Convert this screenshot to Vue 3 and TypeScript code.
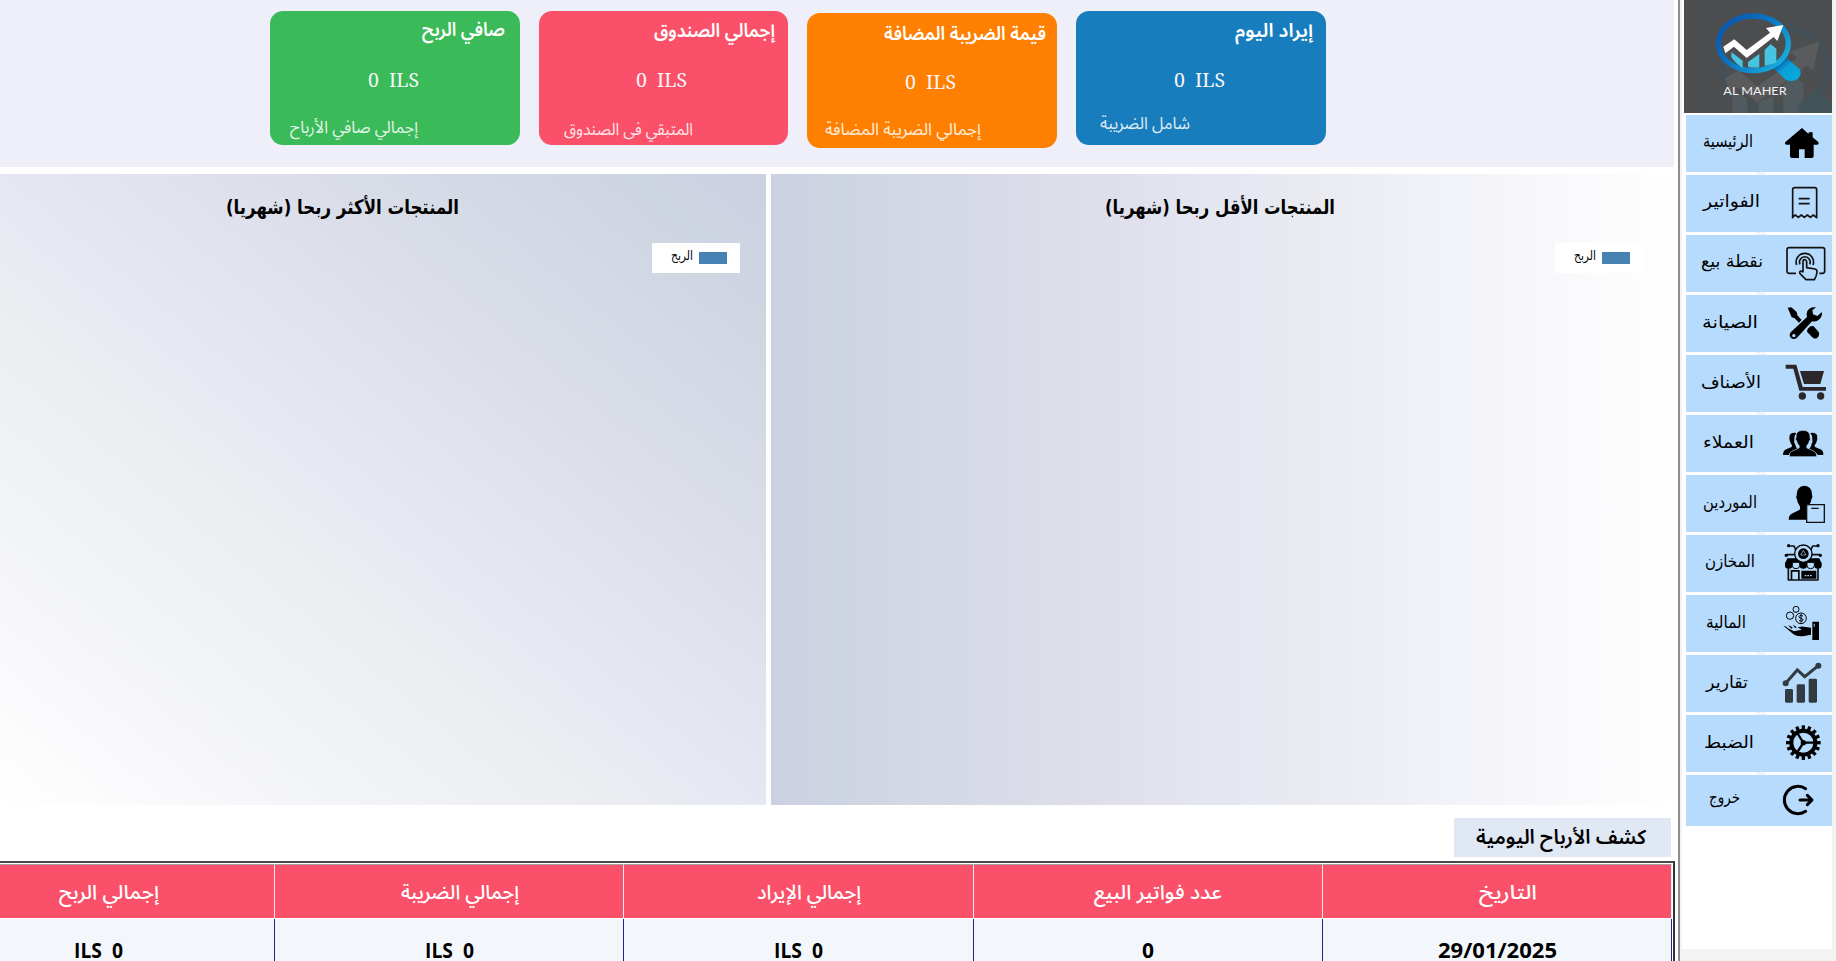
<script setup lang="ts">
import { h, type FunctionalComponent } from 'vue'

interface FitProps {
  text: string
  w: number
  base: number
  height: number
  rtl?: boolean
}

// A single line of text set to an exact width, on an exact baseline.
const FitText: FunctionalComponent<FitProps> = (p) =>
  h('svg', { class: 'fit', width: p.w, height: p.height }, [
    h(
      'text',
      {
        x: p.w / 2,
        y: p.base,
        'text-anchor': 'middle',
        textLength: p.w,
        lengthAdjust: 'spacingAndGlyphs',
        direction: p.rtl === false ? 'ltr' : 'rtl',
      },
      p.text,
    ),
  ])
FitText.props = ['text', 'w', 'base', 'height', 'rtl']

interface Card {
  tone: string
  title: string
  titleW: number
  titleBase: number
  sub: string
  subW: number
  subBase: number
}

const cards: Card[] = [
  { tone: 'green', title: 'صافي الربح', titleW: 83, titleBase: 25, sub: 'إجمالي صافي الأرباح', subW: 128, subBase: 22 },
  { tone: 'pink', title: 'إجمالي الصندوق', titleW: 121, titleBase: 26, sub: 'المتبقي فى الصندوق', subW: 129, subBase: 24 },
  { tone: 'orange', title: 'قيمة الضريبة المضافة', titleW: 162, titleBase: 27, sub: 'إجمالي الضريبة المضافة', subW: 156, subBase: 21.5 },
  { tone: 'blue', title: 'إيراد اليوم', titleW: 78, titleBase: 25.5, sub: 'شامل الضريبة', subW: 90, subBase: 17.5 },
]

interface Column {
  head: string
  headW: number
  value: string
  valueW: number
}

const columns: Column[] = [
  { head: 'إجمالي الربح', headW: 100, value: 'ILS  0', valueW: 49 },
  { head: 'إجمالي الضريبة', headW: 118, value: 'ILS  0', valueW: 49 },
  { head: 'إجمالي الإيراد', headW: 104, value: 'ILS  0', valueW: 49 },
  { head: 'عدد فواتير البيع', headW: 128, value: '0', valueW: 12 },
  { head: 'التاريخ', headW: 58, value: '29/01/2025', valueW: 119 },
]

interface NavItem {
  id: string
  label: string
  left: number
  w: number
  base: number
}

const nav: NavItem[] = [
  { id: 'home', label: 'الرئيسية', left: 17, w: 50, base: 32 },
  { id: 'invoices', label: 'الفواتير', left: 17, w: 57, base: 32 },
  { id: 'pos', label: 'نقطة بيع', left: 15, w: 62, base: 32 },
  { id: 'service', label: 'الصيانة', left: 16, w: 56, base: 32.5 },
  { id: 'items', label: 'الأصناف', left: 15, w: 60, base: 32.5 },
  { id: 'clients', label: 'العملاء', left: 17, w: 51, base: 33 },
  { id: 'suppliers', label: 'الموردين', left: 17, w: 54, base: 32.5 },
  { id: 'stores', label: 'المخازن', left: 18.5, w: 50, base: 32 },
  { id: 'finance', label: 'المالية', left: 20, w: 40, base: 32.5 },
  { id: 'reports', label: 'تقارير', left: 20, w: 42, base: 32.5 },
  { id: 'settings', label: 'الضبط', left: 18, w: 50, base: 33 },
  { id: 'exit', label: 'خروج', left: 23, w: 31, base: 28 },
]

const gearTeeth = Array.from({ length: 16 }, (_, i) => i * 22.5)
</script>

<template>
  <div class="app">
    <main class="main">
      <section class="summary">
        <article v-for="c in cards" :key="c.tone" class="card" :class="c.tone">
          <FitText class="card-title" :text="c.title" :w="c.titleW" :base="c.titleBase" :height="50" />
          <FitText class="card-value" text="0  ILS" :w="51" :base="25.5" :height="50" :rtl="false" />
          <FitText class="card-sub" :text="c.sub" :w="c.subW" :base="c.subBase" :height="34" />
        </article>
      </section>

      <section class="charts">
        <div class="chart most">
          <FitText class="chart-title" text="المنتجات الأكثر ربحا (شهريا)" :w="233" :base="40" :height="69" />
          <div class="legend">
            <FitText class="legend-text" text="الربح" :w="22" :base="17" :height="30" />
            <i class="swatch"></i>
          </div>
        </div>
        <div class="chart least">
          <FitText class="chart-title" text="المنتجات الأقل ربحا (شهريا)" :w="230" :base="40" :height="69" />
          <div class="legend">
            <FitText class="legend-text" text="الربح" :w="22" :base="17" :height="30" />
            <i class="swatch"></i>
          </div>
        </div>
      </section>

      <div class="tag">
        <FitText class="tag-text" text="كشف الأرباح اليومية" :w="170" :base="26" :height="39" />
      </div>

      <section class="table">
        <div v-for="(c, i) in columns" :key="i" class="col">
          <div class="th"><FitText :text="c.head" :w="c.headW" :base="34" :height="53" /></div>
          <div class="td"><FitText :text="c.value" :w="c.valueW" :base="38.5" :height="42" :rtl="false" /></div>
        </div>
      </section>
    </main>

    <aside class="side">
      <div class="panel">
        <svg class="logo" width="148" height="113" viewBox="0 0 444 339">
          <defs>
            <linearGradient id="ring" x1="0" y1="0" x2="1" y2="0.7">
              <stop offset="0" stop-color="#0b4fa8" />
              <stop offset="0.5" stop-color="#0a74c0" />
              <stop offset="1" stop-color="#16a9dc" />
            </linearGradient>
            <linearGradient id="grip" x1="0" y1="0" x2="1" y2="1">
              <stop offset="0.1" stop-color="#0644a0" />
              <stop offset="0.45" stop-color="#0aa0d8" />
              <stop offset="1" stop-color="#08a9dd" />
            </linearGradient>
          </defs>
          <rect width="444" height="339" fill="#4d4e50" />
          <g opacity="0.5">
            <ellipse cx="274" cy="204" rx="158" ry="128" fill="none" stroke="#3e535c" stroke-width="24" />
            <path d="M124 235l40-24 56 48 120-86-24-18 90-32-18 88-20-14-148 110-58-46-24 18z" fill="#66686a" />
            <path d="M146 339v-70l44 26v44zM224 339v-32l44-20v52zM298 339v-84l30-28 30 22v90z" fill="#56686f" />
            <path d="M392 270l52 40v29h-96l-10-20z" fill="#3b5864" />
          </g>
          <path d="M268 204q24-10 40-30l38 32q10 16-4 30-16 12-36 4z" fill="url(#grip)" />
          <ellipse cx="208" cy="130" rx="105" ry="82" fill="#4b4d4f" stroke="url(#ring)" stroke-width="16" />
          <path d="M142 156l34 26v22q-22-14-34-32zM192 186l34-24v40q-18 2-34-2zM242 150l18-18 17 14v42l-35 10z" fill="#47c5e0" />
          <path d="M118 140l33-22 37 32 70-52-12-14 52-9-18 48-11-12-81 63-38-34-26 20z" fill="#fff" />
          <text x="213" y="284" class="brand" text-anchor="middle" textLength="190" lengthAdjust="spacingAndGlyphs">AL MAHER</text>
        </svg>

        <nav class="menu">
          <button v-for="n in nav" :key="n.id" class="item" :class="{ last: n.id === 'exit' }">
            <FitText class="nav-text" :style="{ marginLeft: n.left + 'px' }" :text="n.label" :w="n.w" :base="n.base" :height="50" />
            <svg class="icon" width="50" height="57" viewBox="0 0 150 171">
              <path v-if="n.id === 'home'" d="M66 39L17 80q-6 8 4 9h9v34q0 6 6 6h21v-26h17v26h21q6 0 6-6V89h9q10-1 4-9l-16-13V52h-12v5z" />
              <g v-else-if="n.id === 'invoices'" class="line">
                <path d="M38 128V44q0-6 6-6h60q6 0 6 6v84l-10-8-9 7-9-7-9 7-9-7-9 7-9-7-9 7z" />
                <path d="M56 71h33M56 86h33" />
              </g>
              <g v-else-if="n.id === 'pos'" class="line">
                <path d="M48 115H28q-7 0-7-7V44q0-6 7-6h99q7 0 7 6v64q0 7-7 7h-9" />
                <path d="M50 90a26 26 0 1 1 49 0M60 88a16 16 0 1 1 29 0" />
                <path class="skin" d="M69 111V80q0-6 5-6t6 6v18l25 4q7 2 6 9-1 13-8 23H78L60 116q-3-6 3-8z" />
              </g>
              <g v-else-if="n.id === 'service'">
                <path d="M23 38l11-1 16 14 2 10 13 14-8 8-14-14-8-2z" />
                <path d="M91 94l9-1 16 18q4 10-4 17-8 6-16-2l-15-16q0-9 10-16z" />
                <path fill-rule="evenodd" d="M108 37q-18-3-26 11-4 9-1 18L33 111q-8 10 0 18 9 7 18-1l45-49q13 3 22-6 9-9 8-22l-14 12-13-5-2-12zM42 117a5 5 0 1 1-1 0z" />
              </g>
              <g v-else-if="n.id === 'items'" fill="#2b272b">
                <path d="M17 29h32l19 67h70v11H58L40 41H17zM60 48h72l-11 39H72z" />
                <circle cx="67" cy="123" r="11" /><circle cx="122" cy="123" r="11" />
              </g>
              <g v-else-if="n.id === 'clients'">
                <path d="M9 120q0-13 10-17l16-7q3-4-1-8-8-12-5-27 4-10 20-7-7 8-6 19-2 8 2 13 3 13 9 16-2 6-16 10-10 4-12 8zM130 120q1-13-9-17l-16-7q-3-4 1-8 8-12 5-27-4-10-20-7 7 8 6 19 2 8-2 13-3 13-9 16 2 6 16 10 10 4 12 8z" />
                <path d="M28 125q-1-13 7-16l22-10q3-4-1-9-5-4-6-12-5-3-2-11-2-20 21-21 23 1 21 21 3 8-2 11-1 8-6 12-4 5-1 9l22 10q7 3 7 16z" stroke="#b6dbfc" stroke-width="2" />
              </g>
              <g v-else-if="n.id === 'suppliers'">
                <path d="M26 134q0-14 9-18l24-12q3-6-1-13-7-8-7-18-4-5-1-11Q49 34 73 32q24 1 23 29 3 6-2 12 0 10-7 18l-8 14v29z" />
                <path class="box" d="M80 89h53v53H80zM94 100h22" />
              </g>
              <g v-else-if="n.id === 'stores'">
                <path class="line" d="M50 50L42 33H26M90 50l8-17h14M44 59H20M96 59h24M25 100v35h89v-35" />
                <path d="M15 82h22v10a11 9 0 0 1-22 0zM59 82h22v10a11 9 0 0 1-22 0zM103 82h22v10a11 9 0 0 1-22 0zM22 70h96l5 12H17z" />
                <path class="thin" d="M37 82v10a11 9 0 0 0 22 0V82zM81 82v10a11 9 0 0 0 22 0V82z" />
                <circle cx="70" cy="56" r="26" fill="#b6dbfc" stroke="#000" stroke-width="4" />
                <circle cx="70" cy="56" r="16" /><path d="M70 46l8 14H62z" fill="none" stroke="#b6dbfc" stroke-width="2" />
                <circle cx="26" cy="32" r="5" /><circle cx="114" cy="32" r="5" /><circle cx="19" cy="61" r="5" /><circle cx="121" cy="61" r="5" />
                <path d="M64 107h45v24H64zM32 105h27v5H32zM32 105h5v30h-5zM54 105h5v30h-5z" />
                <path d="M74 122h24" stroke="#b6dbfc" stroke-width="4" stroke-dasharray="5 3" />
              </g>
              <g v-else-if="n.id === 'finance'">
                <g class="thin"><circle cx="48" cy="43" r="9" /><circle cx="30" cy="62" r="11" /><circle cx="63" cy="70" r="16" /></g>
                <path class="thin" d="M69 63q-11-5-12 2 0 4 6 5t6 5q-2 7-12 1M63 57v26" />
                <path d="M10 92q8 0 14 8l18 9 23-5q-8-8-14-4 6-6 20-5l22 3v21l-20 4q-23 4-37-9zM24 90l14 7-3 5zM38 89l12 7-4 4z" />
                <path fill-rule="evenodd" d="M97 80h20v55H97zM101 86h3v9h-3z" />
              </g>
              <g v-else-if="n.id === 'reports'" fill="#333b42">
                <rect x="15" y="102" width="24" height="41" rx="4" /><rect x="50" y="88" width="25" height="55" rx="4" /><rect x="86" y="71" width="25" height="72" rx="4" />
                <path d="M17 85l35-40 22 20 41-33" fill="none" stroke="#333b42" stroke-width="9" />
                <circle cx="17" cy="85" r="9" /><circle cx="115" cy="32" r="9" />
              </g>
              <g v-else-if="n.id === 'settings'">
                <rect v-for="a in gearTeeth" :key="a" x="65" y="31" width="10" height="14" :transform="`rotate(${a} 70 83)`" />
                <circle cx="70" cy="83" r="36" fill="none" stroke="#000" stroke-width="12" />
                <path d="M50 51l20 32-20 32M70 83h36" fill="none" stroke="#000" stroke-width="7" />
                <circle cx="70" cy="83" r="8" />
              </g>
              <g v-else fill="none" stroke="#000" stroke-width="9" stroke-linecap="round" stroke-linejoin="round">
                <path d="M77 41A41 41 0 1 0 77 109" />
                <path d="M60 75h34" /><path d="M82 61l14 14-14 14" />
              </g>
            </svg>
          </button>
        </nav>
      </div>
    </aside>
  </div>
</template>

<style>
html,
body {
  margin: 0;
  overflow: hidden;
}
.fit {
  display: block;
  flex: none;
  overflow: visible;
}
.fit text {
  white-space: pre;
}
</style>

<style scoped>
.app {
  display: flex;
  width: 1836px;
  height: 961px;
  overflow: hidden;
  background: #fff;
  font-family: 'Noto Sans Arabic', 'DejaVu Sans', sans-serif;
}
.main {
  display: flex;
  flex-direction: column;
  width: 1678px;
  flex: none;
}
.summary {
  display: flex;
  align-items: flex-start;
  gap: 19.2px;
  box-sizing: border-box;
  width: 1674px;
  height: 166.5px;
  padding: 10.5px 0 0 270px;
  background: #efeffa;
}
.card {
  display: flex;
  flex-direction: column;
  box-sizing: border-box;
  width: 249.5px;
  height: 134.5px;
  flex: none;
  border-radius: 13px;
  fill: #fff;
}
.green { background: #3aba58; }
.pink { background: #fa5069; }
.orange { background: #ff8000; margin-top: 2.7px; }
.blue { background: #177dbc; }
.card-title {
  align-self: flex-end;
  margin-right: 13px;
  font-size: 19px;
  font-weight: 600;
}
.green .card-title { margin-right: 15px; }
.orange .card-title { margin-right: 11px; }
.card-value {
  margin-left: 97.5px;
  font-family: 'Noto Serif', 'Liberation Serif', serif;
  font-size: 20px;
  fill: #f7f5fa;
}
.card-sub {
  margin-left: 20px;
  font-size: 17px;
  opacity: 0.86;
}
.pink .card-sub { margin-left: 25px; }
.orange .card-sub { margin-left: 17.5px; }
.blue .card-sub { margin-left: 24px; }
.charts {
  display: flex;
  gap: 5px;
  height: 631px;
  margin-top: 7.5px;
}
.chart {
  display: flex;
  flex-direction: column;
  flex: none;
}
.most {
  width: 766px;
  background: linear-gradient(to bottom left, #cbd1e2 0%, #cfd6e2 12%, #dfe1ec 38%, #e6e9f3 52%, #ecedf1 60%, #f3f4f8 78%, #fff 100%);
}
.least {
  width: 904px;
  background: linear-gradient(to right, #cbd1e2 0%, #cfd6e2 10%, #dfdfeb 37%, #e6e9f3 54%, #e9eaef 58%, #f3f4f9 77%, #fff 100%);
}
.chart-title {
  font-family: 'DejaVu Sans', sans-serif;
  font-size: 20px;
  font-weight: bold;
}
.most .chart-title { margin-left: 226px; }
.least .chart-title { margin-left: 333.5px; }
.legend {
  display: flex;
  align-items: center;
  gap: 6px;
  box-sizing: border-box;
  width: 87.5px;
  height: 30px;
  padding-left: 19px;
  background: #fff;
}
.most .legend { margin-left: 652px; }
.least .legend { margin-left: 784px; }
.legend-text {
  font-family: 'DejaVu Sans', sans-serif;
  font-size: 13px;
}
.swatch {
  width: 28px;
  height: 11.5px;
  background: #4682b4;
}
.tag {
  display: flex;
  width: 217px;
  height: 39px;
  margin: 12.5px 0 0 1454px;
  background: #e0e8f4;
}
.tag-text {
  margin-left: 22px;
  font-size: 20px;
  font-weight: 600;
}
.table {
  display: flex;
  box-sizing: border-box;
  width: 1675px;
  height: 100px;
  margin-top: 4.5px;
  padding-right: 1px;
  border-top: 2px solid #4a4a4a;
  border-right: 2px solid #333;
  background: #fff;
}
.col {
  flex: none;
  width: 349.3px;
}
.col:first-child { width: 275px; }
.th,
.td {
  display: flex;
  justify-content: center;
  box-sizing: border-box;
}
.th {
  height: 55px;
  margin-top: 1px;
  padding-left: 21px;
  border-top: 1px solid #a5a5a5;
  border-bottom: 1px solid #fff;
  border-right: 1px solid #eee;
  background: #fa5069;
  fill: #fff;
  font-size: 20px;
  font-weight: 500;
}
.td {
  height: 43px;
  border-right: 1px solid #23239a;
  background: #f3f7fc;
  font-family: 'Open Sans', sans-serif;
  font-size: 21px;
  font-weight: bold;
}
.col:first-child .th {
  padding: 0 56px 0 0;
}
.col:first-child .td {
  padding-right: 77px;
}
.side {
  box-sizing: border-box;
  width: 158px;
  flex: none;
  padding: 0 4px 0 2px;
  border-left: 2px solid #8d8d8d;
  background: #f3f3f3;
}
.panel {
  box-sizing: border-box;
  width: 150px;
  height: 949px;
  padding-left: 2px;
  background: #fff;
}
.logo {
  display: block;
}
.brand {
  font-family: Lato, sans-serif;
  font-size: 34px;
  fill: #f2f2f2;
}
.menu {
  display: flex;
  flex-direction: column;
  gap: 3px;
  width: 146px;
  height: 710px;
  margin: 2px 0 0 2px;
  background: linear-gradient(#f5f5f5, #f5f5f5) 70px 0 / 10px 100% no-repeat;
}
.item {
  display: grid;
  grid-template-columns: 94px 50px;
  width: 146px;
  height: 57px;
  flex: none;
  margin: 0;
  padding: 0;
  border: 0;
  background: #b6dbfc;
  font-family: inherit;
}
.item.last { height: 50.5px; }
.nav-text {
  font-family: 'DejaVu Sans', sans-serif;
  font-size: 17px;
}
.icon {
  display: block;
}
.line {
  fill: none;
  stroke: #111;
  stroke-width: 5;
  stroke-linejoin: round;
}
.thin {
  fill: none;
  stroke: #000;
  stroke-width: 3;
}
.skin {
  fill: #b6dbfc;
}
.box {
  fill: #b6dbfc;
  stroke: #111;
  stroke-width: 4;
}
</style>
